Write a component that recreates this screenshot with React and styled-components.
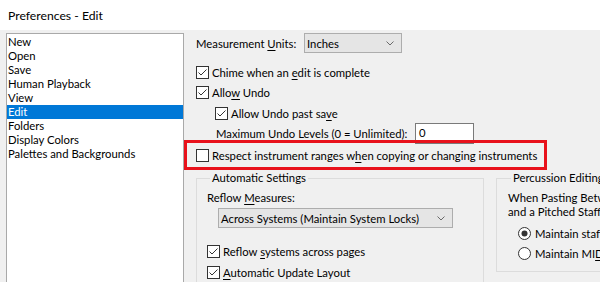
import React from 'react';
import styled, { createGlobalStyle } from 'styled-components';

const GlobalStyle = createGlobalStyle`
  html, body {
    margin: 0;
    padding: 0;
    background: #f0f0f0;
  }
  body {
    width: 600px;
    height: 282px;
    overflow: hidden;
    font-family: Lato, "Noto Sans", sans-serif;
    font-size: 11.3px;
    color: #000;
  }
`;

const Window = styled.div`
  width: 600px;
  height: 282px;
  display: flex;
  flex-direction: column;
  overflow: hidden;
`;

const TitleBar = styled.div`
  height: 30px;
  flex-shrink: 0;
  background: #fff;
  display: flex;
  align-items: center;
  padding-left: 8px;
  font-size: 12.2px;
  color: #000;
`;

const Body = styled.div`
  flex: 1;
  display: flex;
  background: #f0f0f0;
  overflow: hidden;
`;

const PageList = styled.ul`
  list-style: none;
  margin: 3px 0 0 6px;
  padding: 1px 0 0;
  width: 176px;
  height: 280px;
  background: #fff;
  border: 1px solid #a9a9a9;
  flex-shrink: 0;
`;

const PageItem = styled.li`
  height: 14px;
  line-height: 14px;
  padding-left: 1px;
  white-space: nowrap;
  background: ${(p) => (p.$selected ? '#0078d7' : 'transparent')};
  color: ${(p) => (p.$selected ? '#fff' : '#000')};
`;

const Panel = styled.div`
  flex: 1;
  margin-left: 12px;
  padding-top: 3px;
  display: flex;
  flex-direction: column;
  min-width: 0;
`;

const Row = styled.div`
  display: flex;
  align-items: center;
  flex-shrink: 0;
  height: 20px;
  margin-top: ${(p) => p.$top || 0}px;
  padding-left: ${(p) => p.$indent || 0}px;
  white-space: nowrap;
  position: relative;
`;

const Label = styled.span`
  width: ${(p) => (p.$width ? `${p.$width}px` : 'auto')};
  flex-shrink: 0;
  white-space: pre;
`;

const U = styled.span`
  text-decoration: underline;
  text-underline-offset: 2px;
`;

const Select = styled.div`
  width: ${(p) => p.$width}px;
  height: 20px;
  box-sizing: border-box;
  flex-shrink: 0;
  background: #e5e5e5;
  border: 1px solid #adadad;
  display: flex;
  align-items: center;
  justify-content: space-between;
  padding: 0 7px 0 2px;
`;

const TextInput = styled.div`
  width: 59px;
  height: 21px;
  box-sizing: border-box;
  background: #fff;
  border: 1px solid #7a7a7a;
  padding: 2px 0 0 3px;
`;

const BoxMark = styled.svg`
  width: 13px;
  height: 13px;
  flex-shrink: 0;
  margin-right: 3px;
`;

const RadioMark = styled.svg`
  width: 13px;
  height: 13px;
  flex-shrink: 0;
  margin-right: 4px;
`;

const Callout = styled.div`
  position: absolute;
  left: -12px;
  top: -5px;
  width: 363px;
  height: 30px;
  box-sizing: border-box;
  border: 3px solid #e8111b;
  pointer-events: none;
`;

const Groups = styled.div`
  display: flex;
  gap: 12px;
  margin-top: 6px;
  flex-shrink: 0;
`;

const Group = styled.fieldset`
  margin: 0;
  padding: 0 0 0 ${(p) => p.$pad}px;
  border: 1px solid #dcdcdc;
  width: ${(p) => p.$width}px;
  height: ${(p) => p.$height}px;
  flex-shrink: 0;
  box-sizing: border-box;
  overflow: hidden;
`;

const Legend = styled.legend`
  padding: 0 2px;
  margin-left: 3px;
  line-height: 14px;
`;

const Caption = styled.div`
  line-height: 14px;
  margin-top: ${(p) => p.$top || 0}px;
  white-space: nowrap;
`;

const Chevron = () => (
  <svg width="8" height="5" viewBox="0 0 8 5">
    <path d="M0.5 0.5 L4 4 L7.5 0.5" fill="none" stroke="#6a6a6a" strokeWidth="1" />
  </svg>
);

const CheckBox = ({ checked }) => (
  <BoxMark viewBox="0 0 13 13">
    <rect x="0.5" y="0.5" width="12" height="12" fill="#fff" stroke="#333" />
    {checked && <path d="M2.5 6.5 L5 9 L10.5 3.5" fill="none" stroke="#333" strokeWidth="1" />}
  </BoxMark>
);

const Radio = ({ on }) => (
  <RadioMark viewBox="0 0 13 13">
    <circle cx="6.5" cy="6.5" r="6" fill="#fff" stroke="#333" />
    {on && <circle cx="6.5" cy="6.5" r="3" fill="#333" />}
  </RadioMark>
);

const pages = [
  'New',
  'Open',
  'Save',
  'Human Playback',
  'View',
  'Edit',
  'Folders',
  'Display Colors',
  'Palettes and Backgrounds',
];

export default function App() {
  return (
    <Window>
      <GlobalStyle />
      <TitleBar>Preferences - Edit</TitleBar>
      <Body>
        <PageList>
          {pages.map((p) => (
            <PageItem key={p} $selected={p === 'Edit'}>
              {p}
            </PageItem>
          ))}
        </PageList>
        <Panel>
          <Row>
            <Label $width={108}>
              Measurement <U>U</U>nits:
            </Label>
            <Select $width={98}>
              <Label>Inches</Label>
              <Chevron />
            </Select>
          </Row>
          <Row $top={9}>
            <CheckBox checked />
            <Label>
              Chime when an <U>e</U>dit is complete
            </Label>
          </Row>
          <Row>
            <CheckBox checked />
            <Label>
              Allo<U>w</U> Undo
            </Label>
          </Row>
          <Row $top={1} $indent={19}>
            <CheckBox checked />
            <Label>
              Allow Undo past sa<U>v</U>e
            </Label>
          </Row>
          <Row $indent={20}>
            <Label $width={199}>
              Maximum Undo <U>L</U>evels (0 = Unlimited):
            </Label>
            <TextInput>0</TextInput>
          </Row>
          <Row $top={2}>
            <CheckBox />
            <Label>
              Respect instrument ranges w<U>h</U>en copying or changing instruments
            </Label>
            <Callout />
          </Row>
          <Groups>
            <Group $width={288} $height={120} $pad={10}>
              <Legend>Automatic Settings</Legend>
              <Caption $top={6}>
                Reflow <U>M</U>easures:
              </Caption>
              <Row $top={3} $indent={11}>
                <Select $width={235}>
                  <Label>Across Systems (Maintain System Locks)</Label>
                  <Chevron />
                </Select>
              </Row>
              <Row $top={13}>
                <CheckBox checked />
                <Label>
                  Reflow <U>s</U>ystems across pages
                </Label>
              </Row>
              <Row $top={1}>
                <CheckBox checked />
                <Label>
                  <U>A</U>utomatic Update Layout
                </Label>
              </Row>
            </Group>
            <Group $width={140} $height={101} $pad={11}>
              <Legend>Percussion Editing</Legend>
              <Caption $top={6}>When Pasting Between a Percussion</Caption>
              <Caption>and a Pitched Staff:</Caption>
              <Row $top={4} $indent={10}>
                <Radio on />
                <Label>Maintain staff position</Label>
              </Row>
              <Row $indent={10}>
                <Radio />
                <Label>
                  Maintain MI<U>D</U>I note
                </Label>
              </Row>
            </Group>
          </Groups>
        </Panel>
      </Body>
    </Window>
  );
}
